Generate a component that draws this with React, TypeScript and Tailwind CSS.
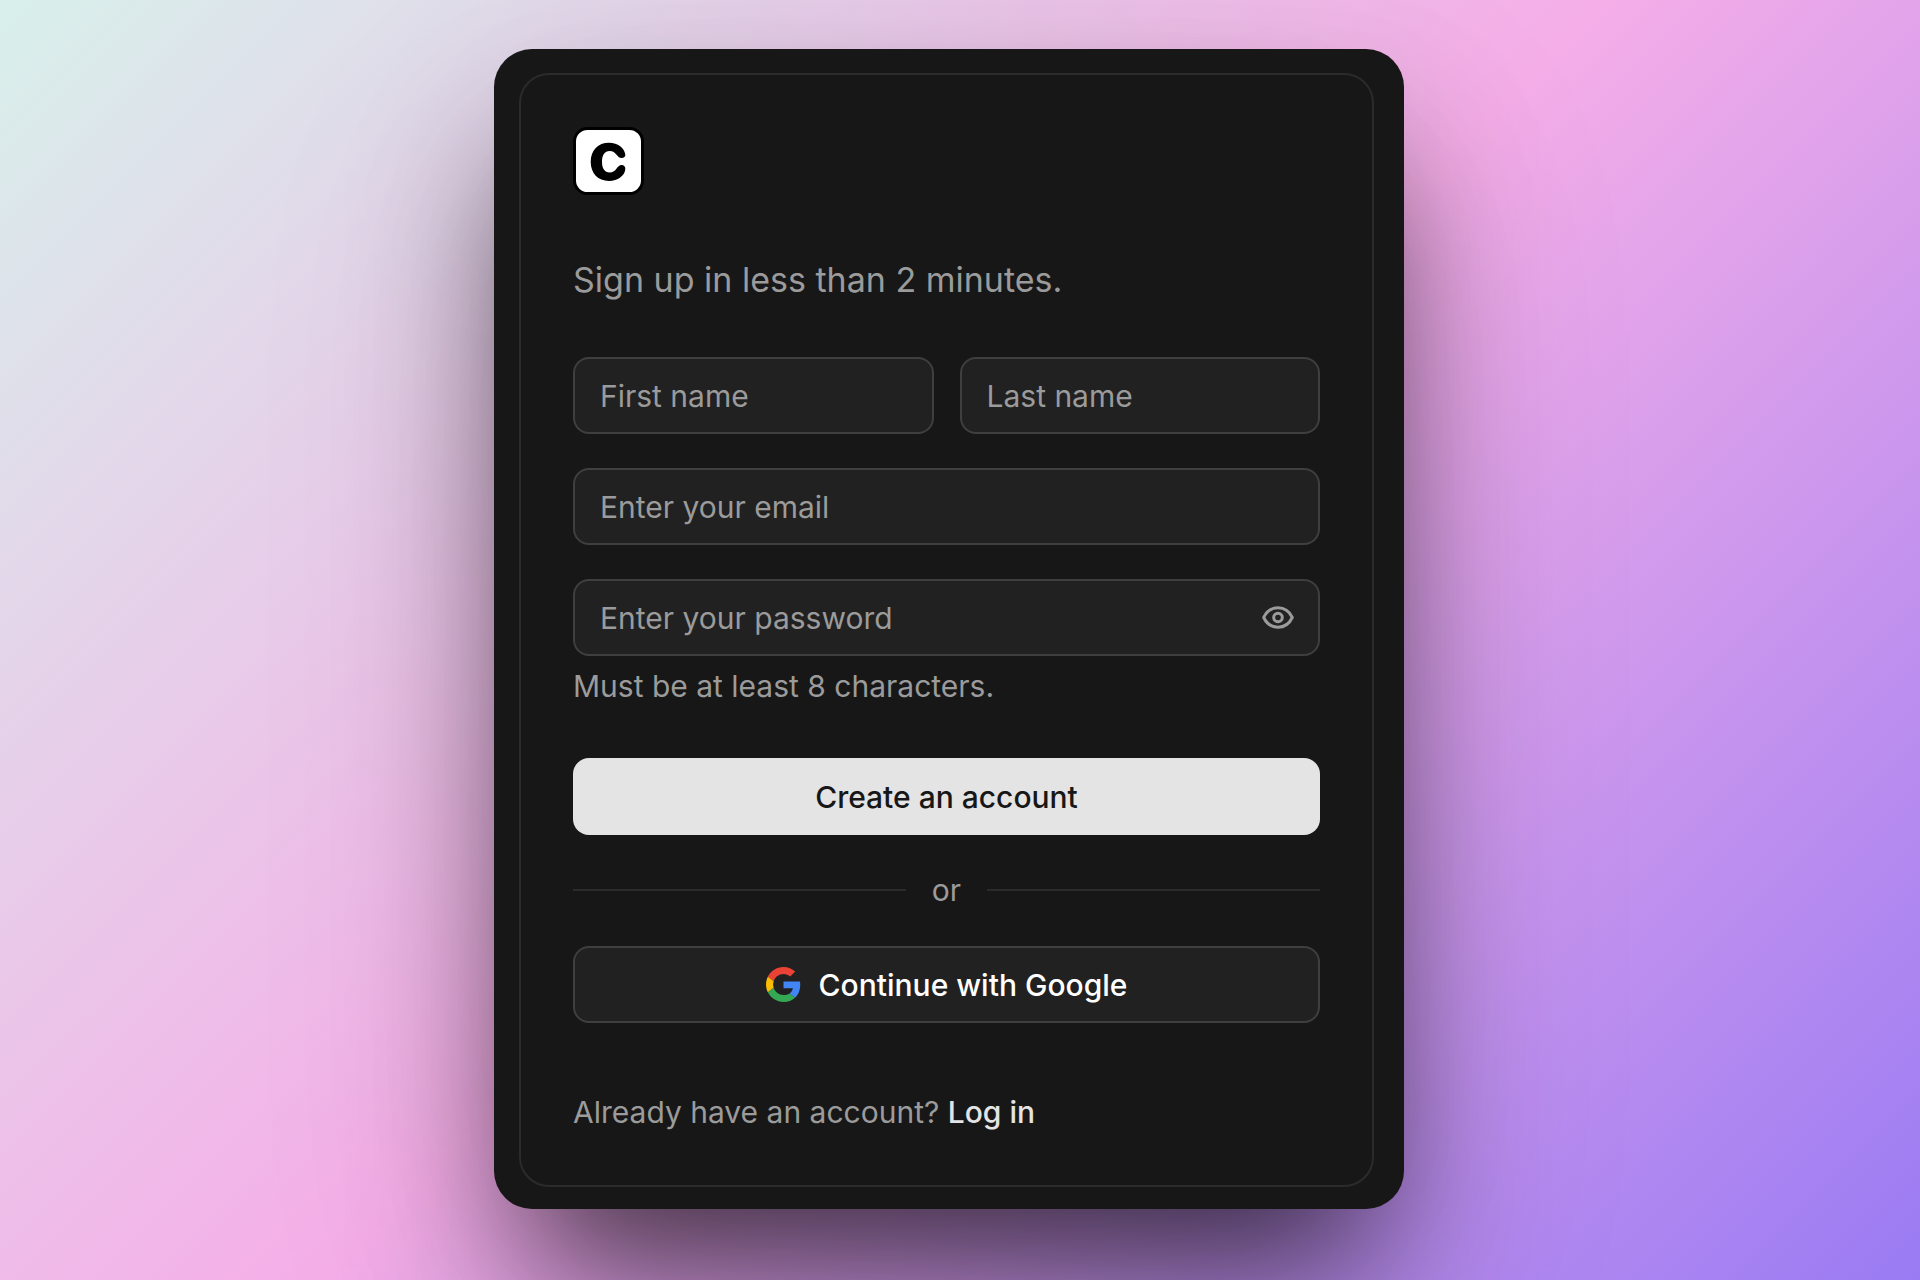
import { useState } from "react";
import type { InputHTMLAttributes } from "react";

function Field({ label, className = "", ...props }: InputHTMLAttributes<HTMLInputElement> & { label: string }) {
  return (
    <input
      aria-label={label}
      placeholder={label}
      className={`h-[77px] w-full min-w-0 rounded-2xl border-2 border-[#3f3f3f] bg-[#212121] px-[25px] text-[30px] text-white outline-none placeholder:text-[#9b9b9b] focus:border-[#6b6b6b] ${className}`}
      {...props}
    />
  );
}

function EyeIcon() {
  return (
    <svg viewBox="0 0 32 32" className="size-8" fill="none" stroke="currentColor" strokeWidth="3" strokeLinejoin="round" aria-hidden="true">
      <path d="M1.700 15.500C4.800 9 9.800 5.800 16 5.800S27.200 9 30.300 15.500C27.200 22 22.200 25.200 16 25.200S4.800 22 1.700 15.500Z" />
      <circle cx="16" cy="15.500" r="4.300" />
    </svg>
  );
}

function GoogleIcon() {
  return (
    <svg viewBox="0 0 48 48" className="size-[35px]" aria-hidden="true">
      <path fill="#EA4335" d="M24 9.5c3.54 0 6.71 1.22 9.21 3.6l6.85-6.85C35.9 2.38 30.47 0 24 0 14.62 0 6.51 5.38 2.56 13.220l7.980 6.190C12.430 13.720 17.740 9.500 24 9.500z" />
      <path fill="#4285F4" d="M46.980 24.550c0-1.570-.150-3.090-.380-4.550H24v9.020h12.940c-.580 2.960-2.260 5.480-4.780 7.180l7.730 6c4.510-4.180 7.090-10.360 7.090-17.650z" />
      <path fill="#FBBC05" d="M10.530 28.590c-.480-1.450-.760-2.990-.760-4.590s.270-3.140.760-4.590l-7.980-6.190C.920 16.460 0 20.120 0 24c0 3.880.920 7.540 2.560 10.780l7.970-6.190z" />
      <path fill="#34A853" d="M24 48c6.480 0 11.930-2.130 15.890-5.810l-7.730-6c-2.150 1.450-4.920 2.300-8.160 2.300-6.260 0-11.570-4.220-13.470-9.910l-7.980 6.190C6.510 42.620 14.620 48 24 48z" />
    </svg>
  );
}

function Logo() {
  return (
    <svg viewBox="0 0 71 68" className="h-[68px] w-[71px]" role="img" aria-label="C">
      <rect x="1.500" y="1.500" width="68" height="65" rx="13" fill="#fff" stroke="#000" strokeWidth="3" />
      <path d="M52.300 27.500C51.500 21 45 15.700 36 15.700C25 15.700 17.700 23.300 17.700 34.800S25 54 36 54C45 54 51.500 48.700 52.300 42.500C52.600 39.500 51 38 48.500 38C44 38 43.500 45.500 36.700 45.500C31.500 45.500 29 41.500 29 34.800S31.500 24 36.700 24C43.300 24 44 31 48.500 31C51 31 52.600 29.700 52.300 27.500Z" fill="#000" />
    </svg>
  );
}

export default function App() {
  const [visible, setVisible] = useState(false);
  return (
    <main className="flex min-h-screen items-start justify-center bg-[linear-gradient(135deg,#d8f0eb_0%,#f5aee8_50%,#9a7bf3_100%)] pt-[49px] pr-[22px] font-['Inter',sans-serif] text-[30px] leading-10 text-[#9b9b9b]">
      <div className="w-full max-w-[910px] rounded-[38px] bg-[#171717] pt-6 pr-[30px] pb-[22px] pl-[25px] shadow-[0_90px_150px_-30px_rgba(0,0,0,0.68),0_90px_280px_0_rgba(0,0,0,0.12)]">
        <section className="rounded-[30px] border-2 border-[#2b2b2b] px-[52px] pt-[52px] pb-[53px]">
          <Logo />
          <h1 className="mt-[65px] text-[34px] leading-10">Sign up in less than 2 minutes.</h1>
          <form className="mt-[57px]" onSubmit={(e) => e.preventDefault()}>
            <div className="grid grid-cols-2 gap-[26px]">
              <Field label="First name" />
              <Field label="Last name" />
            </div>
            <Field label="Enter your email" type="email" className="mt-[34px]" />
            <div className="relative mt-[34px]">
              <Field label="Enter your password" type={visible ? "text" : "password"} className="pr-20" />
              <button type="button" aria-label="Show password" onClick={() => setVisible(!visible)} className="absolute inset-y-0 right-[26px] flex items-center">
                <EyeIcon />
              </button>
            </div>
            <p className="mt-[10px]">Must be at least 8 characters.</p>
            <button type="submit" className="mt-[52px] h-[77px] w-full rounded-2xl bg-[#e4e4e4] font-medium text-[#171717]">
              Create an account
            </button>
            <div className="mt-[35px] flex items-center gap-[26px]">
              <div className="h-0.5 flex-1 bg-[#2b2b2b]" />
              <span>or</span>
              <div className="h-0.5 flex-1 bg-[#2b2b2b]" />
            </div>
            <button type="button" className="mt-9 flex h-[77px] w-full items-center justify-center gap-[18px] rounded-2xl border-2 border-[#3f3f3f] bg-[#212121] font-medium text-white">
              <GoogleIcon />
              Continue with Google
            </button>
          </form>
          <p className="mt-[69px]">
            Already have an account?{" "}
            <a href="#" className="font-medium text-[#e4e4e4]">
              Log in
            </a>
          </p>
        </section>
      </div>
    </main>
  );
}
